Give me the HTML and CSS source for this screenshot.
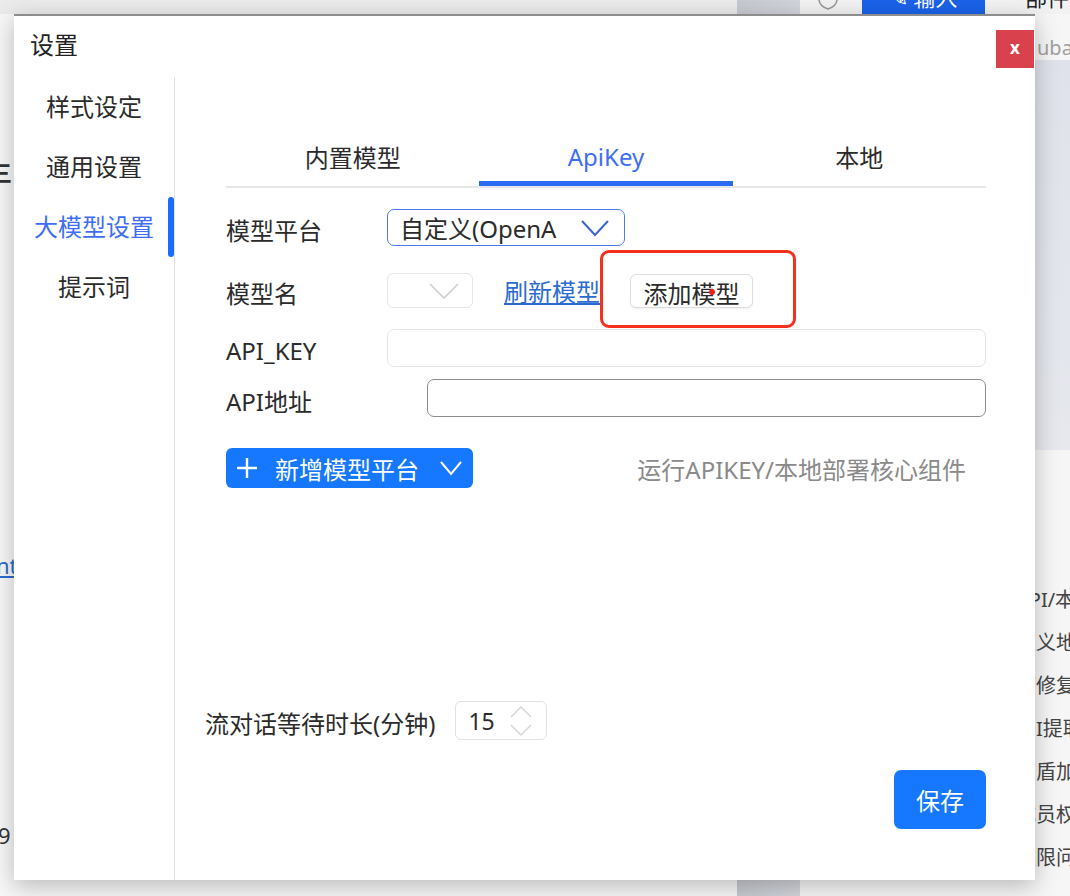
FILE: index.html
```html
<!DOCTYPE html>
<html lang="zh-CN">

<head>
    <meta charset="UTF-8">
    <meta name="viewport" content="width=device-width, initial-scale=1.0">
    <title>设置</title>
    <link rel="stylesheet" href="styles.css">
</head>

<body>
    <div class="page">
        <div class="page-left">
            <div class="page-topbar"></div>
            <p class="frag frag-menu">三</p>
            <p class="frag frag-link"><a href="#">nt</a></p>
            <p class="frag frag-num">9</p>
        </div>
        <div class="page-slot"></div>
        <div class="page-right">
            <div class="toolbar">
                <span class="tool-icon">
                    <svg width="26" height="26" viewBox="0 0 26 26"><path d="M4 6 L13 3 L22 6 L22 13 Q22 20 13 23 Q4 20 4 13 Z" fill="none" stroke="#9a9a9a" stroke-width="1.6"/></svg>
                </span>
                <span class="tool-btn">✎ 输入</span>
                <span class="tool-text">部件</span>
            </div>
            <div class="side-panel">
                <p class="panel-search">uba</p>
                <div class="panel-shade"></div>
                <ul class="panel-list">
                    <li>API/本</li>
                    <li>定义地</li>
                    <li>可修复</li>
                    <li>中I提取</li>
                    <li>护盾加</li>
                    <li>成员权</li>
                    <li>权限问</li>
                </ul>
            </div>
        </div>
    </div>

    <div class="dialog">
        <div class="dialog-head">
            <h1>设置</h1>
            <button class="close-btn">x</button>
        </div>
        <div class="dialog-body">
            <div class="side">
                <div class="side-item">样式设定</div>
                <div class="side-item">通用设置</div>
                <div class="side-item active">大模型设置</div>
                <div class="side-item">提示词</div>
            </div>
            <div class="main">
                <div class="tabs">
                    <div class="tab">内置模型</div>
                    <div class="tab active">ApiKey</div>
                    <div class="tab">本地</div>
                </div>

                <div class="form-row row-platform">
                    <label class="label">模型平台</label>
                    <div class="select">
                        <span>自定义(OpenA</span>
                        <svg width="30" height="18" viewBox="0 0 30 18"><polyline points="2,2 15,16 28,2" fill="none" stroke="#3b63d6" stroke-width="2"/></svg>
                    </div>
                </div>

                <div class="form-row row-model">
                    <label class="label">模型名</label>
                    <div class="select select-small">
                        <svg width="32" height="18" viewBox="0 0 32 18"><polyline points="2,2 16,16 30,2" fill="none" stroke="#cfcfcf" stroke-width="1.6"/></svg>
                    </div>
                    <a class="link" href="#">刷新模型</a>
                    <button class="btn-plain">添加模型</button>
                    <div class="mark"><span class="mark-dot"></span></div>
                </div>

                <div class="form-row row-key">
                    <label class="label">API_KEY</label>
                    <input class="input" type="text">
                </div>

                <div class="form-row row-url">
                    <label class="label label-wide">API地址</label>
                    <input class="input input-dark" type="text">
                </div>

                <div class="form-row row-actions">
                    <button class="btn-add">
                        <svg width="22" height="22" viewBox="0 0 22 22"><path d="M11 1 V21 M1 11 H21" stroke="#fff" stroke-width="2.4"/></svg>
                        <span>新增模型平台</span>
                        <svg width="24" height="16" viewBox="0 0 24 16"><polyline points="2,2 12,14 22,2" fill="none" stroke="#fff" stroke-width="2"/></svg>
                    </button>
                    <span class="hint">运行APIKEY/本地部署核心组件</span>
                </div>

                <div class="form-row row-wait">
                    <label class="wait-label">流对话等待时长(分钟)</label>
                    <div class="number">
                        <span>15</span>
                        <svg width="26" height="34" viewBox="0 0 26 34"><polyline points="3,13 13,3 23,13" fill="none" stroke="#d4d4d4" stroke-width="1.4"/><polyline points="3,21 13,31 23,21" fill="none" stroke="#d4d4d4" stroke-width="1.4"/></svg>
                    </div>
                </div>

                <button class="btn-save">保存</button>
            </div>
        </div>
    </div>
</body>

</html>
```

FILE: styles.css
```css
* {
    box-sizing: border-box;
}

body {
    margin: 0;
    padding: 0;
    font-family: "Noto Sans", "Noto Sans CJK SC", sans-serif;
    color: #2b2b2b;
    background-color: #f3f3f3;
    overflow: hidden;
}

/* page behind the dialog */
.page {
    display: flex;
    height: 896px;
}

.page-left {
    flex-shrink: 0;
    width: 737px;
    background-color: #f7f7f7;
}

.page-topbar {
    height: 14px;
    background-color: #ebebeb;
}

.frag {
    margin: 0;
    font-size: 22px;
    line-height: 24px;
    color: #333;
}

.frag-menu {
    margin-top: 146px;
    margin-left: -10px;
    font-weight: bold;
}

.frag-link {
    margin-top: 369px;
    margin-left: -4px;
}

.frag-link a {
    color: #2a6bd1;
}

.frag-num {
    margin-top: 246px;
    margin-left: -2px;
}

.page-slot {
    flex-shrink: 0;
    width: 63px;
    background: linear-gradient(90deg, #c6c9cf, #d3d5dc);
}

.page-right {
    flex: 1;
    min-width: 0;
    overflow: hidden;
    background-color: #f6f6f6;
}

.toolbar {
    height: 14px;
    display: flex;
    align-items: flex-end;
    overflow: hidden;
    background-color: #f2f2f2;
}

.tool-icon {
    flex-shrink: 0;
    margin-left: 15px;
    height: 30px;
    display: flex;
    align-items: center;
}

.tool-btn {
    flex-shrink: 0;
    margin-left: 21px;
    width: 123px;
    height: 30px;
    line-height: 26px;
    text-align: center;
    font-size: 22px;
    color: #fff;
    background-color: #1a62e8;
}

.tool-text {
    flex-shrink: 0;
    margin-left: 40px;
    height: 30px;
    line-height: 26px;
    font-size: 22px;
    color: #222;
}

.side-panel {
    padding-left: 216px;
}

.panel-search {
    margin: 22px 0 0;
    padding-left: 21px;
    font-size: 20px;
    line-height: 24px;
    color: #a0a0a0;
    white-space: nowrap;
}

.panel-shade {
    height: 390px;
    background: linear-gradient(180deg, #dfe2ea, #e6e8ee);
}

.panel-list {
    list-style: none;
    margin: 128px 0 0;
    padding: 0;
}

.panel-list li {
    height: 43px;
    line-height: 43px;
    font-size: 20px;
    color: #444;
    white-space: nowrap;
}

/* dialog */
.dialog {
    position: absolute;
    left: 14px;
    top: 14px;
    width: 1021px;
    height: 866px;
    background-color: #fff;
    border-top: 2px solid #8d8d8d;
    box-shadow: 0 6px 22px rgba(0, 0, 0, 0.25);
    display: flex;
    flex-direction: column;
}

.dialog-head {
    height: 61px;
    display: flex;
    align-items: flex-start;
    padding-left: 16px;
}

.dialog-head h1 {
    margin: 0;
    font-size: 24px;
    font-weight: normal;
    line-height: 58px;
    color: #222;
}

.close-btn {
    margin-left: auto;
    margin-top: 14px;
    margin-right: 1px;
    width: 38px;
    height: 38px;
    border: none;
    background-color: #d9424c;
    color: #fff;
    font-family: "Noto Sans", sans-serif;
    font-size: 17px;
    font-weight: bold;
    padding: 0 0 3px;
}

.dialog-body {
    flex: 1;
    display: flex;
}

.side {
    width: 161px;
    border-right: 1px solid #e2e2e2;
}

.side-item {
    position: relative;
    height: 60px;
    display: flex;
    align-items: center;
    justify-content: center;
    padding-bottom: 4px;
    font-size: 24px;
    color: #2b2b2b;
}

.side-item.active {
    color: #3d6ef5;
}

.side-item.active::after {
    content: "";
    position: absolute;
    right: 0;
    top: 0;
    bottom: 0;
    width: 6px;
    border-radius: 3px;
    background-color: #1a6cff;
}

.main {
    flex: 1;
    display: flex;
    flex-direction: column;
    padding: 51px 49px 51px 51px;
}

.tabs {
    display: flex;
    border-bottom: 2px solid #e7e7e7;
}

.tab {
    flex: 1;
    height: 58px;
    display: flex;
    align-items: center;
    justify-content: center;
    padding-bottom: 2px;
    font-size: 24px;
    color: #2b2b2b;
}

.tab.active {
    color: #3d6ef5;
    box-shadow: inset 0 -5px 0 #2a6af5;
}

.form-row {
    display: flex;
    align-items: center;
}

.label {
    width: 161px;
    margin-top: 4px;
    font-size: 24px;
    color: #2b2b2b;
}

.label-wide {
    width: 201px;
}

.row-platform {
    margin-top: 21px;
    height: 37px;
}

.select {
    width: 238px;
    height: 37px;
    border: 1.5px solid #4c7bf2;
    border-radius: 7px;
    padding: 0 14px 0 12px;
    display: flex;
    align-items: center;
    justify-content: space-between;
    font-size: 24px;
    color: #2b2b2b;
}

.row-model {
    position: relative;
    margin-top: 27px;
    height: 35px;
}

.select-small {
    width: 86px;
    height: 35px;
    border: 1px solid #e6e6e6;
    border-radius: 6px;
    padding-right: 12px;
    justify-content: flex-end;
}

.link {
    margin-left: 31px;
    font-size: 24px;
    color: #2a6bd1;
    text-decoration: underline;
}

.btn-plain {
    margin-left: 30px;
    width: 123px;
    height: 34px;
    border: 1px solid #dedede;
    border-radius: 6px;
    background-color: #fff;
    font-family: inherit;
    font-size: 24px;
    color: #2b2b2b;
    padding: 0;
    box-shadow: 0 1px 2px rgba(0, 0, 0, 0.06);
}

/* red annotation box */
.mark {
    position: absolute;
    left: 374px;
    top: -23px;
    width: 196px;
    height: 78px;
    border: 3px solid #f5301c;
    border-radius: 9px;
}

.mark-dot {
    position: absolute;
    left: 106px;
    top: 36px;
    width: 6px;
    height: 6px;
    border-radius: 50%;
    background-color: #e8241a;
}

.row-key {
    margin-top: 21px;
    height: 38px;
}

.row-url {
    margin-top: 12px;
    height: 38px;
}

.input {
    flex: 1;
    height: 38px;
    border: 1px solid #e4e4e4;
    border-radius: 7px;
    outline: none;
}

.input-dark {
    border: 1.5px solid #8c8c8c;
}

.row-actions {
    margin-top: 31px;
    height: 40px;
}

.btn-add {
    width: 247px;
    height: 40px;
    border: none;
    border-radius: 6px;
    background-color: #1677ff;
    color: #fff;
    font-family: inherit;
    font-size: 24px;
    display: flex;
    align-items: center;
    padding: 0 0 0 10px;
}

.btn-add span {
    margin-left: 17px;
    margin-right: 20px;
}

.hint {
    margin-left: auto;
    margin-right: 20px;
    font-size: 24px;
    color: #8a8a8a;
}

.row-wait {
    margin-top: auto;
    margin-left: -21px;
    height: 39px;
}

.wait-label {
    margin-top: 4px;
    font-size: 24px;
    color: #2b2b2b;
}

.number {
    margin-left: 20px;
    width: 92px;
    height: 39px;
    border: 1px solid #e2e2e2;
    border-radius: 6px;
    display: flex;
    align-items: center;
    padding: 0 12px;
    font-size: 23px;
}

.number svg {
    margin-left: auto;
}

.btn-save {
    align-self: flex-end;
    margin-top: 30px;
    width: 92px;
    height: 59px;
    border: none;
    border-radius: 7px;
    background-color: #1677ff;
    color: #fff;
    font-family: inherit;
    font-size: 24px;
}
```
